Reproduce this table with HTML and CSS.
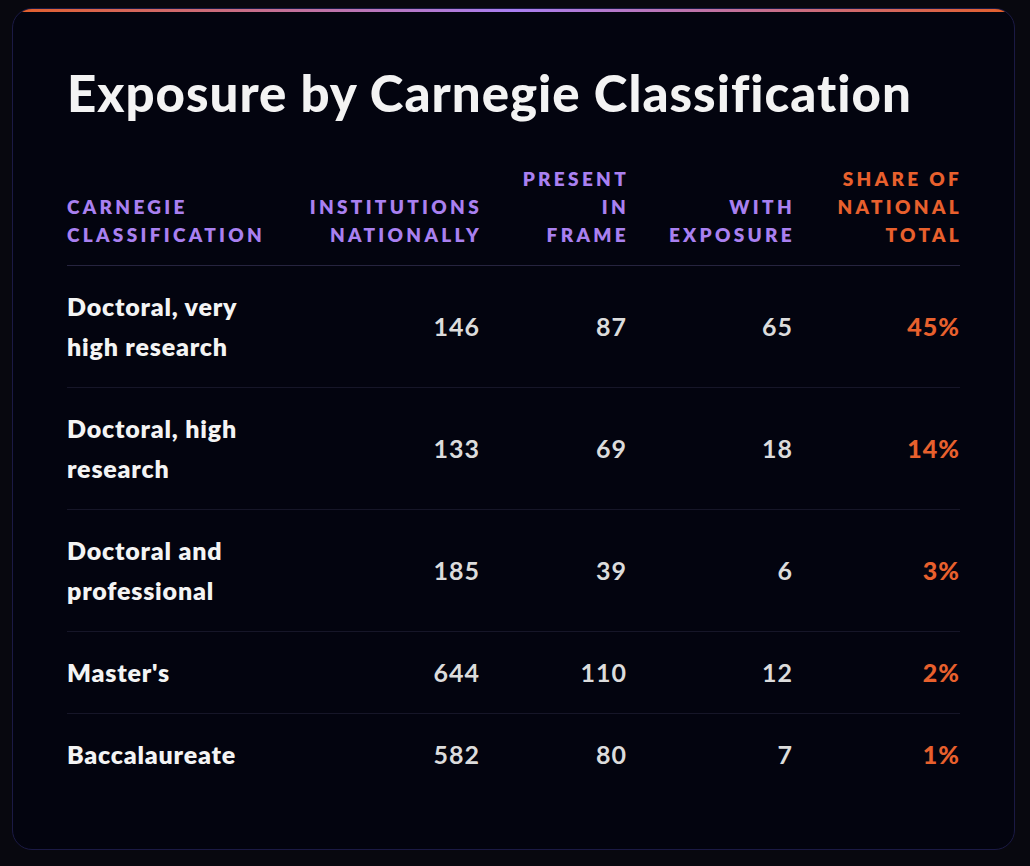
FILE: index.html
```html
<!DOCTYPE html>
<html lang="en">
<head>
<meta charset="utf-8">
<title>Exposure by Carnegie Classification</title>
<link rel="stylesheet" href="styles.css">
</head>
<body>
<section class="card">
  <div class="accent"></div>
  <h1 class="title">Exposure by Carnegie Classification</h1>
  <table class="data">
    <colgroup>
      <col class="c1"><col class="c2"><col class="c3"><col class="c4"><col class="c5">
    </colgroup>
    <thead>
      <tr>
        <th class="lbl">Carnegie<br>Classification</th>
        <th class="num"><span class="t">Institutions<br>Nationally</span></th>
        <th class="num"><span class="t">Present<br>in<br>Frame</span></th>
        <th class="num"><span class="t">With<br>Exposure</span></th>
        <th class="num hot"><span class="t">Share of<br>National<br>Total</span></th>
      </tr>
    </thead>
    <tbody>
      <tr><td class="lbl">Doctoral, very<br>high research</td><td class="num">146</td><td class="num">87</td><td class="num">65</td><td class="num hot">45%</td></tr>
      <tr><td class="lbl">Doctoral, high<br>research</td><td class="num">133</td><td class="num">69</td><td class="num">18</td><td class="num hot">14%</td></tr>
      <tr><td class="lbl">Doctoral and<br>professional</td><td class="num">185</td><td class="num">39</td><td class="num">6</td><td class="num hot">3%</td></tr>
      <tr><td class="lbl">Master's</td><td class="num">644</td><td class="num">110</td><td class="num">12</td><td class="num hot">2%</td></tr>
      <tr><td class="lbl">Baccalaureate</td><td class="num">582</td><td class="num">80</td><td class="num">7</td><td class="num hot">1%</td></tr>
    </tbody>
  </table>
</section>
</body>
</html>
```
FILE: styles.css
```css
html, body {
  margin: 0;
  padding: 0;
  background: #08080f;
}
body {
  padding: 8px 15px 16px 12px;
  font-family: "Lato", "Open Sans", sans-serif;
  color: #f2f2f2;
}
.card {
  position: relative;
  overflow: hidden;
  box-sizing: border-box;
  width: 1003px;
  height: 842px;
  background: #03040f;
  border: 1px solid #1b1a45;
  border-radius: 20px;
  padding: 54px 54px 52px 54px;
}
.accent {
  position: absolute;
  left: 0;
  right: 0;
  top: 0;
  height: 3px;
  background: linear-gradient(90deg, #e35f2b 0%, #a97ff2 50%, #e35f2b 100%);
}
.title {
  margin: 0 0 42px 0;
  font-size: 51px;
  line-height: 60px;
  font-weight: 900;
  letter-spacing: 1px;
  color: #f3f3f3;
}
.data {
  width: 893px;
  border-collapse: collapse;
  table-layout: fixed;
}
.c1 { width: 233px; }
.c2 { width: 180px; }
.c3 { width: 147px; }
.c4 { width: 166px; }
.c5 { width: 167px; }
.data th {
  padding: 0 0 16px 0;
  font-size: 19px;
  line-height: 28px;
  font-weight: 800;
  letter-spacing: 3.3px;
  text-transform: uppercase;
  color: #a980f0;
  vertical-align: bottom;
  border-bottom: 1px solid #26243f;
}
.data th.num { text-align: right; }
.data th.lbl { text-align: left; }
.data th.hot { color: #e8602d; }
.data th .t {
  display: inline-block;
  margin-right: -2px;
}
.data td {
  padding: 20px 0 21px 0;
  font-size: 25px;
  line-height: 40px;
  vertical-align: middle;
  border-bottom: 1px solid #161628;
}
.data tbody tr:last-child td { border-bottom: none; }
.data td.lbl {
  font-weight: 800;
  letter-spacing: 0.8px;
  color: #f4f4f4;
}
.data td.num {
  text-align: right;
  font-weight: 700;
  letter-spacing: 1px;
  color: #dcdcdc;
}
.data td.hot {
  color: #e8602d;
  font-weight: 900;
}
```
